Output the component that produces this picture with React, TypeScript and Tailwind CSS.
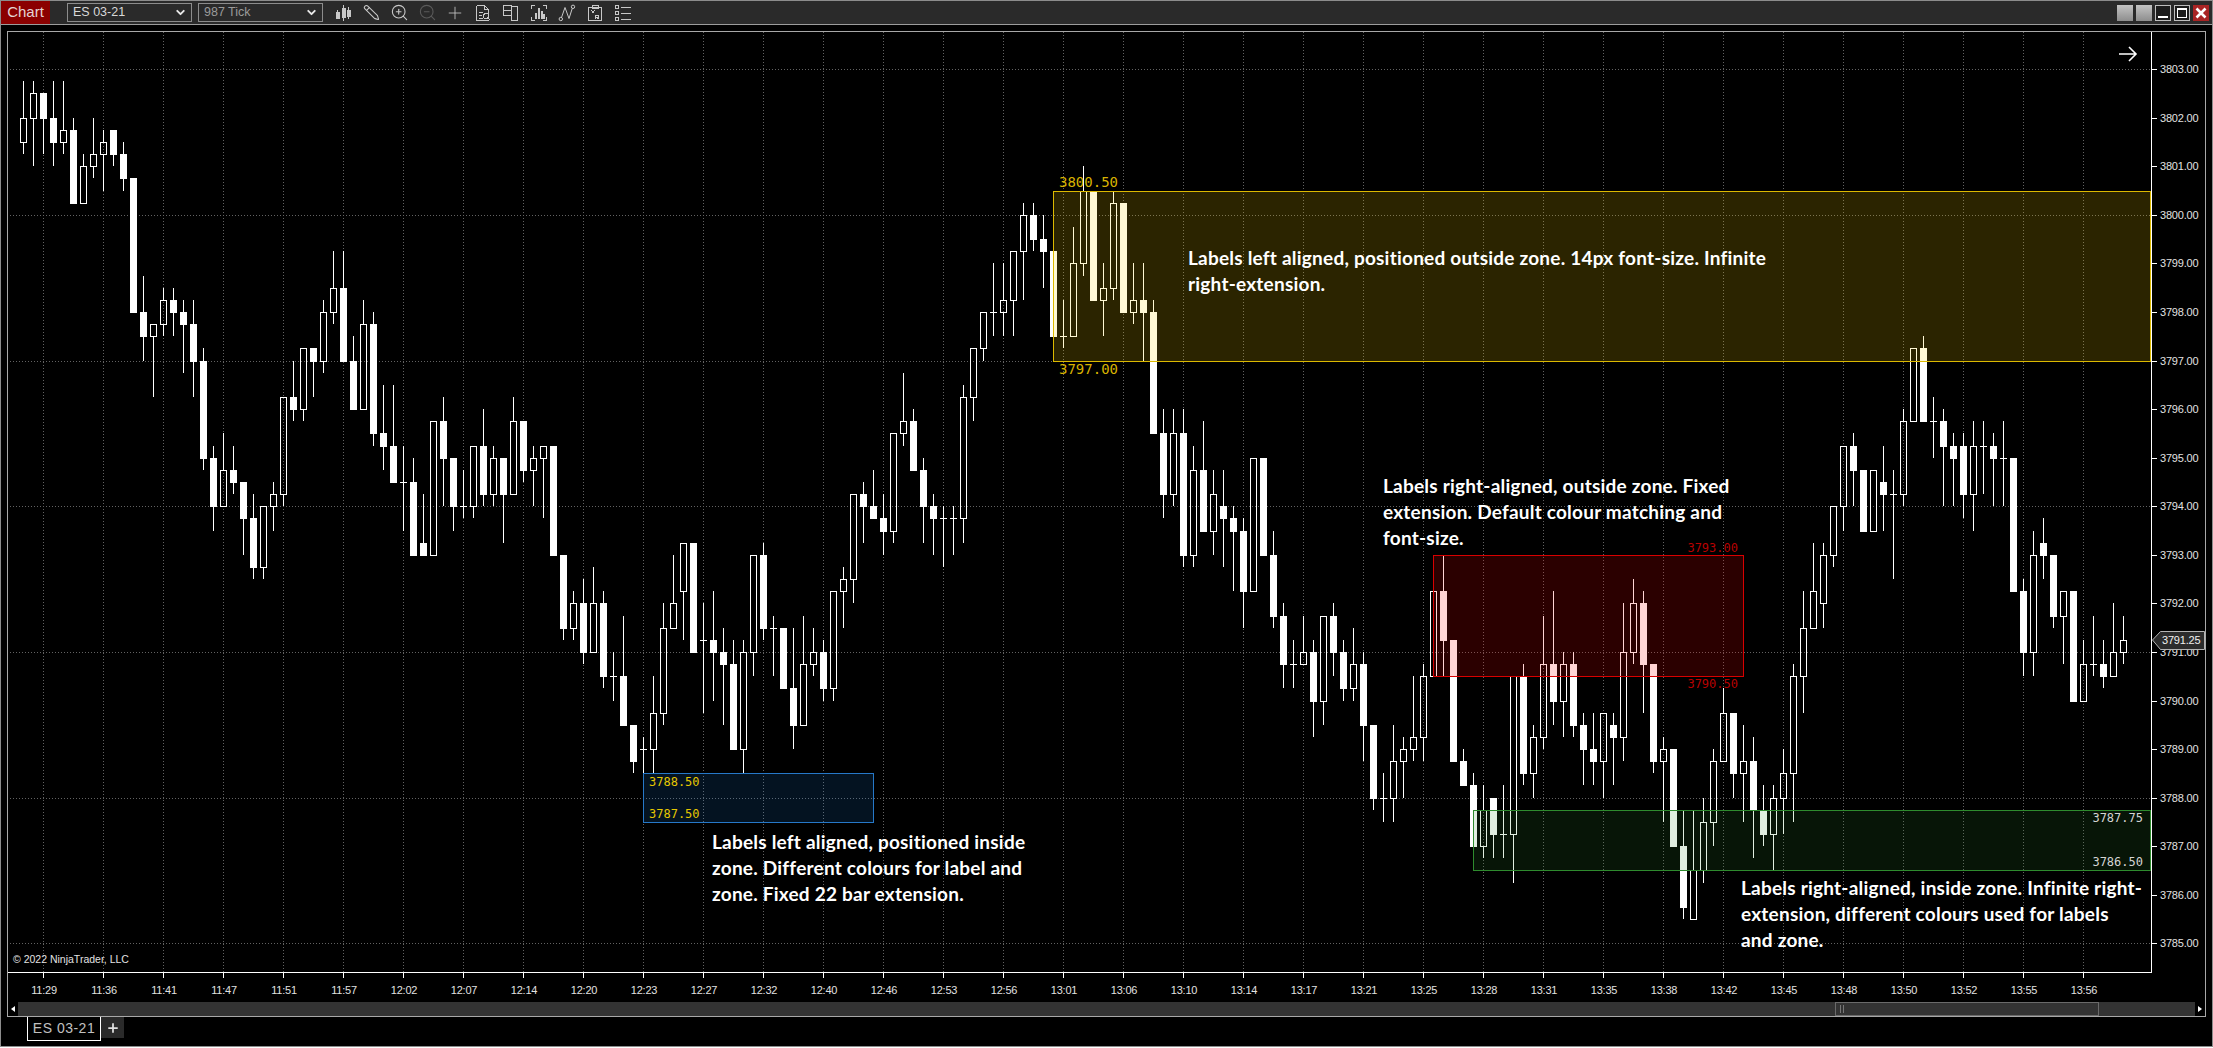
import React from 'react';
import { ChevronDown, Pencil, Plus, ZoomIn, ZoomOut } from 'lucide-react';

// [high, bodyTop, bodyBottom, low, filled] in ticks above 3785.00
type Bar = [number, number, number, number, number];

const BARS: Bar[] = [
  [71,68,66,65,0],[71,70,68,64,0],[70,70,68,65,1],[71,68,66,64,1],[71,67,66,65,0],[68,67,61,61,1],[65,64,61,61,0],[68,65,64,63,0],
  [67,66,65,62,0],[67,67,65,64,1],[66,65,63,62,1],[63,63,52,52,1],[55,52,50,48,1],[51,51,50,45,0],[54,53,51,50,0],[54,53,52,50,1],
  [53,52,51,47,1],[53,51,48,45,1],[49,48,40,39,1],[41,40,36,34,1],[42,39,36,36,0],[41,39,38,37,1],[38,38,35,32,1],[37,35,31,30,1],
  [36,36,31,30,0],[38,37,36,34,0],[45,45,37,36,0],[48,45,44,43,1],[49,49,44,43,0],[49,49,48,45,1],[53,52,48,47,0],[57,54,52,51,0],
  [57,54,48,48,1],[50,48,44,44,1],[53,51,44,44,0],[52,51,42,41,1],[46,42,41,39,1],[46,41,38,38,1],[41,38,38,34,0],[40,38,32,32,1],
  [37,33,32,32,1],[43,43,32,32,0],[45,43,40,36,1],[40,40,36,34,1],[39,36,36,35,0],[41,41,36,35,0],[44,41,37,36,1],[41,40,37,36,0],
  [40,40,37,33,1],[45,43,37,37,0],[43,43,39,38,1],
  [41,40,39,36,0],[41,41,40,35,0],[41,41,32,32,1],[32,32,26,25,1],[29,28,26,25,0],[30,28,24,23,1],[31,28,24,24,0],[29,28,22,21,1],
  [24,22,22,20,0],[27,22,18,18,1],[18,18,15,14,1],[17,16,16,14,0],[22,19,16,14,0],[28,26,19,18,0],[32,28,26,26,0],[33,33,29,25,0],
  [33,33,24,24,1],[28,25,25,19,0],[29,25,24,20,1],[26,24,23,18,1],[25,23,16,16,1],[25,24,16,14,0],[32,32,24,22,0],[33,32,26,25,1],
  [27,26,26,22,0],[26,26,21,21,1],[26,21,18,16,1],[27,23,18,18,0],[26,24,23,22,0],[25,24,21,20,1],[29,29,21,20,0],[31,30,29,26,0],
  [37,37,30,28,0],[38,37,36,33,1],[39,36,35,35,1],[37,35,34,32,1],[42,42,34,33,0],[47,43,42,41,0],[44,43,39,39,1],[40,39,36,33,1],
  [37,36,35,32,1],[36,35,35,31,0],[36,35,35,32,0],[46,45,35,33,0],[49,49,45,43,0],[52,52,49,48,0],[56,52,52,50,0],[56,53,52,50,0],
  [57,57,53,50,0],[61,60,57,53,0],[61,60,58,57,1],[60,58,57,54,1],
  [57,57,50,50,1],[53,50,50,49,0],[59,56,50,50,0],[64,62,56,55,0],[62,62,53,53,1],[56,54,53,50,0],[62,61,54,53,0],[61,61,52,52,1],
  [56,53,52,51,0],[56,53,52,48,1],[53,52,42,42,1],[44,42,37,35,1],[44,42,37,36,0],[44,42,32,31,1],[41,39,32,31,0],[43,39,34,34,1],
  [39,37,34,32,0],[39,36,35,31,1],[36,35,34,29,1],[35,34,29,26,1],[40,40,29,29,0],[40,40,32,32,1],[34,32,27,26,1],[28,27,23,21,1],
  [25,23,23,21,0],[27,24,23,23,0],[25,24,20,17,1],[27,27,20,18,0],[28,27,24,22,1],[25,24,21,20,1],[26,23,21,20,0],[24,23,18,15,1],
  [18,18,12,11,1],[14,12,12,10,0],[18,15,12,10,0],[17,16,15,12,0],[22,17,16,15,0],[23,22,17,15,0],[29,29,22,22,0],[32,29,25,22,1],
  [25,25,15,15,1],[16,15,13,13,1],[14,13,8,8,1],[13,11,8,7,0],[12,12,9,7,1],[13,9,9,7,0],[22,22,9,5,0],[23,22,14,13,1],
  [18,17,14,12,0],[27,23,17,16,0],[29,23,20,18,1],[24,23,20,17,0],
  [24,23,18,17,1],[19,18,16,13,1],[19,16,15,13,1],[19,19,15,12,0],[19,18,17,13,1],[28,24,17,15,0],[30,28,24,23,0],[29,28,23,19,1],
  [23,23,15,14,1],[17,16,15,10,0],[16,16,8,8,1],[11,8,3,2,1],[11,6,2,2,0],[12,10,6,5,0],[16,15,10,8,0],[21,19,15,15,0],
  [19,19,14,12,1],[18,15,14,10,0],[17,15,11,7,1],[13,11,9,8,1],[13,12,9,6,0],[16,14,12,9,0],[23,22,14,10,0],[29,26,22,19,0],
  [33,29,26,26,0],[33,32,28,26,0],[36,36,32,31,0],[41,41,36,34,0],[42,41,39,36,1],[39,39,34,34,1],[39,39,34,34,0],[41,38,37,34,1],
  [39,37,37,30,0],[44,43,37,36,0],[49,49,43,43,0],[50,49,43,43,1],[45,43,43,40,0],[44,43,41,36,1],[42,41,40,36,1],[42,41,37,35,1],
  [43,41,37,34,0],[43,41,41,37,0],[42,41,40,36,1],[43,40,40,36,0],[40,40,29,29,1],[30,29,24,22,1],[34,32,24,22,0],[35,33,32,30,1],
  [32,32,27,26,1],[29,29,27,23,0],[29,29,20,20,1],[25,23,20,20,0],[27,23,23,22,0],[25,23,22,21,1],[28,24,22,22,0],[27,25,24,23,0],
];

const TIMES = ['11:29','11:36','11:41','11:47','11:51','11:57','12:02','12:07','12:14','12:20','12:23','12:27','12:32','12:40','12:46','12:53','12:56','13:01','13:06','13:10','13:14','13:17','13:21','13:25','13:28','13:31','13:35','13:38','13:42','13:45','13:48','13:50','13:52','13:55','13:56'];
const PRICES = ['3803.00','3802.00','3801.00','3800.00','3799.00','3798.00','3797.00','3796.00','3795.00','3794.00','3793.00','3792.00','3791.00','3790.00','3789.00','3788.00','3787.00','3786.00','3785.00'];

const yOf = (tick: number) => Math.round(943.3 - 12.14 * tick);

const Candle: React.FC<{ bar: Bar; index: number }> = ({ bar, index }) => {
  const [high, top, bottom, low, filled] = bar;
  const cx = 23 + index * 10;
  const yTop = yOf(top);
  const yBottom = yOf(bottom);
  return (
    <g fill="#fff">
      <rect x={cx} y={yOf(high)} width={1} height={Math.max(0, yTop - yOf(high))} />
      <rect x={cx} y={yBottom} width={1} height={Math.max(0, yOf(low) - yBottom)} />
      {filled || top === bottom ? (
        <rect x={cx - 3} y={yTop} width={7} height={yBottom - yTop + 1} />
      ) : (
        <rect x={cx - 2.5} y={yTop + 0.5} width={6} height={yBottom - yTop} fill="none" stroke="#fff" />
      )}
    </g>
  );
};

const Zone: React.FC<{ x: number; right: number; hi: number; lo: number; fill: string; stroke: string }> = ({ x, right, hi, lo, fill, stroke }) => (
  <rect x={x + 0.5} y={yOf(hi) + 0.5} width={right - x} height={yOf(lo) - yOf(hi)} fill={fill} stroke={stroke} />
);

const ToolIcon: React.FC<{ children: React.ReactNode }> = ({ children }) => (
  <svg width="18" height="18" viewBox="0 0 18 18" fill="none" stroke="#c8c8c8" strokeWidth="1" shapeRendering="crispEdges">
    {children}
  </svg>
);

const Toolbar = () => (
  <div className="flex h-[24px] items-center border-b border-[#9c9c9c] bg-[#2a2a2a]">
    <div className="flex h-[23px] w-[49px] items-center justify-center bg-[#8b0000] text-[15px] text-[#e4d4d4]">Chart</div>
    <div className="ml-[17px] flex h-[19px] w-[125px] items-center justify-between border border-[#8c8c8c] pl-[5px] pr-[4px] text-[12.5px] text-[#d8d8d8]">
      <span>ES 03-21</span>
      <ChevronDown size={13} strokeWidth={3.5} color="#e8e8e8" />
    </div>
    <div className="ml-[6px] flex h-[19px] w-[125px] items-center justify-between border border-[#8c8c8c] pl-[5px] pr-[4px] text-[12.5px] text-[#9a9a9a]">
      <span>987 Tick</span>
      <ChevronDown size={13} strokeWidth={3.5} color="#e8e8e8" />
    </div>
    <div className="ml-[6px] flex items-center">
      <div className="flex w-[28px] justify-center">
        <ToolIcon>
          <path d="M3.5 6v9M9.5 1v16M14.5 3v12" />
          <path d="M2 8h3v6H2zM8 4h3v9H8zM13 6h3v6h-3z" fill="#c8c8c8" />
        </ToolIcon>
      </div>
      <div className="flex w-[28px] justify-center"><Pencil size={17} color="#c8c8c8" strokeWidth={1.5} className="-scale-x-100" /></div>
      <div className="flex w-[28px] justify-center"><ZoomIn size={19} color="#c8c8c8" strokeWidth={1.4} /></div>
      <div className="flex w-[28px] justify-center"><ZoomOut size={19} color="#5a5a5a" strokeWidth={1.4} /></div>
      <div className="flex w-[28px] justify-center"><Plus size={20} color="#c8c8c8" strokeWidth={1} /></div>
      <div className="flex w-[28px] justify-center">
        <ToolIcon>
          <path d="M2.5 1.5h8l4 4v4M2.5 1.5v15h12M10.5 1.5v4h4M5 8.5h4M5 11.5h3M5 14.5h4" />
          <circle cx="12" cy="12" r="2.5" />
          <path d="M14 14l2.5 2.5" />
        </ToolIcon>
      </div>
      <div className="flex w-[28px] justify-center">
        <ToolIcon>
          <path d="M1.5 1.5h8v5h-8zM1.5 6.5h8v5h-8zM9.5 2.5h6v14h-6z" />
        </ToolIcon>
      </div>
      <div className="flex w-[28px] justify-center">
        <ToolIcon>
          <path d="M1.5 5V1.5H5M13 1.5h3.5V5M1.5 13v3.5H5M13 16.5h3.5V13" />
          <path d="M5.5 9v6M8.5 4v11M11.5 7v8M14 10v5" strokeWidth="2" />
        </ToolIcon>
      </div>
      <div className="flex w-[28px] justify-center">
        <svg width="18" height="18" viewBox="0 0 18 18" fill="none" stroke="#c8c8c8" strokeWidth="1">
          <circle cx="2.8" cy="15" r="1.7" />
          <circle cx="15" cy="2.8" r="1.7" />
          <path d="M3.5 13.5L7 3.5 11 14.5 14.3 4.3" />
        </svg>
      </div>
      <div className="flex w-[28px] justify-center">
        <ToolIcon>
          <path d="M2.5 3.5h13v13h-13zM6 1.5h6v3H6zM5.5 6.5l3 3M8.5 6.5l-3 3M9.5 15v-4h3v2h-3M12.5 15l-1.500-2" />
        </ToolIcon>
      </div>
      <div className="flex w-[28px] justify-center">
        <ToolIcon>
          <path d="M1.5 1.5h3v3h-3zM1.500 7.500h3v3h-3zM1.500 13.500h3v3h-3zM7 3h10M7 9h10M7 15h10" />
        </ToolIcon>
      </div>
    </div>
    <div className="ml-auto mr-[3px] flex gap-[3px]">
      <div className="h-[16px] w-[16px] bg-gradient-to-b from-[#c4c4c4] to-[#8e8e8e]" />
      <div className="h-[16px] w-[16px] bg-gradient-to-b from-[#c4c4c4] to-[#8e8e8e]" />
      <div className="flex h-[16px] w-[16px] items-end justify-center border border-[#bdbdbd] bg-[#1c1c1c] pb-[2px]">
        <div className="h-[2px] w-[10px] bg-white" />
      </div>
      <div className="flex h-[16px] w-[16px] items-center justify-center border border-[#bdbdbd] bg-[#1c1c1c]">
        <div className="h-[10px] w-[10px] border border-t-2 border-white" />
      </div>
      <div className="flex h-[16px] w-[16px] items-center justify-center bg-[#a82424]">
        <svg width="12" height="12" viewBox="0 0 12 12" stroke="#fff" strokeWidth="2.600">
          <path d="M1.500 1.500l9 9M10.500 1.500l-9 9" />
        </svg>
      </div>
    </div>
  </div>
);

const Chart = () => (
  <svg width="2197" height="970" viewBox="8 32 2197 970" shapeRendering="crispEdges" className="block">
    {/* grid */}
    {TIMES.map((_, k) => (
      <line key={k} x1={43.5 + k * 60} y1={32} x2={43.5 + k * 60} y2={972} stroke="#626262" strokeDasharray="1 2" />
    ))}
    {[72, 60, 48, 36, 24, 12, 0].map((t) => (
      <line key={t} x1={10} y1={yOf(t) + 0.5} x2={2151} y2={yOf(t) + 0.5} stroke="#626262" strokeDasharray="1 2" />
    ))}

    {BARS.map((bar, i) => (
      <Candle key={i} bar={bar} index={i} />
    ))}

    {/* zones sit over the bars */}
    <Zone x={1053} right={2150} hi={62} lo={48} fill="rgba(255,215,0,0.17)" stroke="#dcb900" />
    <Zone x={1433} right={1743} hi={32} lo={22} fill="rgba(255,0,0,0.17)" stroke="#d80000" />
    <Zone x={643} right={873} hi={14} lo={10} fill="rgba(30,144,255,0.13)" stroke="#2678c8" />
    <Zone x={1473} right={2150} hi={11} lo={6} fill="rgba(46,139,46,0.15)" stroke="#2e8b2e" />

    <g fontFamily="'DejaVu Sans Mono', monospace" shapeRendering="auto">
      <text x={1059} y={187} fontSize={14} fill="#d9b300">3800.50</text>
      <text x={1059} y={374} fontSize={14} fill="#d9b300">3797.00</text>
      <text x={649} y={786} fontSize={12} fill="#e6c800">3788.50</text>
      <text x={649} y={818} fontSize={12} fill="#e6c800">3787.50</text>
      <text x={1738} y={552} fontSize={12} fill="#b80000" textAnchor="end">3793.00</text>
      <text x={1738} y={688} fontSize={12} fill="#b80000" textAnchor="end">3790.50</text>
      <text x={2143} y={822} fontSize={12} fill="#d4d4d4" textAnchor="end">3787.75</text>
      <text x={2143} y={866} fontSize={12} fill="#d4d4d4" textAnchor="end">3786.50</text>
    </g>

    {/* axes */}
    <rect x={2151} y={32} width={1} height={941} fill="#fff" />
    <rect x={8} y={972} width={2144} height={1} fill="#fff" />
    <g fontFamily="'Liberation Sans', Arial, sans-serif" fontSize={11} fill="#e2e2e2" letterSpacing="-0.2" shapeRendering="auto">
      {TIMES.map((time, k) => (
        <g key={time}>
          <rect x={43 + k * 60} y={973} width={1} height={5} fill="#fff" shapeRendering="crispEdges" />
          <text x={44 + k * 60} y={994} textAnchor="middle">{time}</text>
        </g>
      ))}
      {PRICES.map((price, k) => (
        <g key={price}>
          <rect x={2152} y={yOf(72 - k * 4)} width={5} height={1} fill="#fff" shapeRendering="crispEdges" />
          <text x={2160} y={yOf(72 - k * 4) + 4}>{price}</text>
        </g>
      ))}
      <polygon points="2152.5,640 2160.5,631.5 2204.5,631.5 2204.5,649.5 2160.5,649.5" fill="#2c2c2c" stroke="#b4b4b4" />
      <text x={2162} y={644} fill="#f0f0f0">3791.25</text>
      <text x={13} y={963} fontSize={10.5} letterSpacing="0">© 2022 NinjaTrader, LLC</text>
    </g>

    <path d="M2119 54h17M2129 47l7 7-7 7" fill="none" stroke="#fff" strokeWidth="1.600" shapeRendering="auto" />
  </svg>
);

const Scrollbar = () => (
  <div className="flex h-[14px] bg-[#333333]">
    <div className="flex w-[10px] items-center justify-center bg-black">
      <div className="h-0 w-0 border-y-[3px] border-r-[4px] border-y-transparent border-r-white" />
    </div>
    <div className="w-[1817px]" />
    <div className="flex h-[14px] w-[264px] items-center gap-[2px] border border-[#6a6a6a] pl-[4px]">
      <div className="h-[8px] w-px bg-[#777777]" />
      <div className="h-[8px] w-px bg-[#777777]" />
    </div>
    <div className="flex-1" />
    <div className="flex w-[10px] items-center justify-center bg-black">
      <div className="h-0 w-0 border-y-[3px] border-l-[4px] border-y-transparent border-l-white" />
    </div>
  </div>
);

export default function App() {
  return (
    <div className="flex h-[1047px] w-[2213px] flex-col overflow-hidden border border-[#8c8c8c] bg-black font-['Liberation_Sans',Arial,sans-serif]">
      <Toolbar />

      <div className="ml-[6px] mt-[6px] h-[986px] w-[2199px] border border-[#a8a8a8]">
        <div className="relative h-[970px]">
          <Chart />
          <div className="absolute left-[1180px] top-[213px] whitespace-nowrap font-['Lato',sans-serif] text-[19px] font-bold leading-[26px] tracking-[0.22px] text-white">
            <div>Labels left aligned, positioned outside zone. 14px font-size. Infinite</div>
            <div>right-extension.</div>
          </div>
          <div className="absolute left-[1375px] top-[441px] whitespace-nowrap font-['Lato',sans-serif] text-[19px] font-bold leading-[26px] tracking-[0.22px] text-white">
            <div>Labels right-aligned, outside zone. Fixed</div>
            <div>extension. Default colour matching and</div>
            <div>font-size.</div>
          </div>
          <div className="absolute left-[704px] top-[797px] whitespace-nowrap font-['Lato',sans-serif] text-[19px] font-bold leading-[26px] tracking-[0.22px] text-white">
            <div>Labels left aligned, positioned inside</div>
            <div>zone. Different colours for label and</div>
            <div>zone. Fixed 22 bar extension.</div>
          </div>
          <div className="absolute left-[1733px] top-[843px] whitespace-nowrap font-['Lato',sans-serif] text-[19px] font-bold leading-[26px] tracking-[0.22px] text-white">
            <div>Labels right-aligned, inside zone. Infinite right-</div>
            <div>extension, different colours used for labels</div>
            <div>and zone.</div>
          </div>
        </div>
        <Scrollbar />
      </div>

      <div className="flex pl-[26px]">
        <div className="flex h-[24px] w-[74px] items-center justify-center border-x border-b border-white text-[14px] tracking-[0.5px] text-[#c0c0c0]">ES 03-21</div>
        <div className="flex h-[21px] w-[23px] items-center justify-center bg-[#2a2a2a]">
          <Plus size={14} strokeWidth={3} color="#e0e0e0" />
        </div>
      </div>
    </div>
  );
}
